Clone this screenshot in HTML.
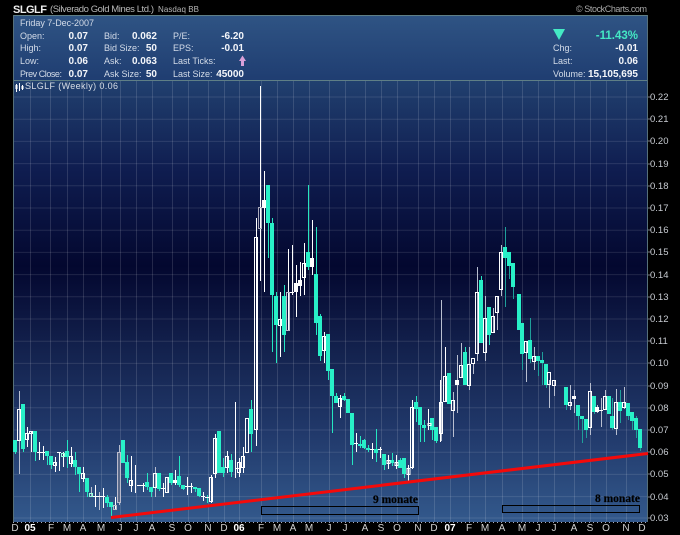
<!DOCTYPE html>
<html><head><meta charset="utf-8"><title>SLGLF</title>
<style>
html,body{margin:0;padding:0;background:#000;width:680px;height:535px;overflow:hidden}
svg{display:block}
text{font-family:"Liberation Sans",sans-serif;font-size:9px;fill:#d3dbe8}
.v{font-weight:bold;fill:#f4f6fa;text-anchor:end;font-size:10px}
.a{font-size:9.5px;fill:#c8ccd2;text-anchor:start}
.x{font-size:10px;fill:#d0d0d0;text-anchor:middle}
.n{font-family:"Liberation Serif",serif;font-weight:bold;font-size:11.5px;fill:#000;stroke:#000;stroke-width:.2}
</style></head><body>
<svg width="680" height="535" viewBox="0 0 680 535" xmlns="http://www.w3.org/2000/svg">
<defs>
<linearGradient id="p" x1="0" y1="0" x2="0" y2="1"><stop offset="0" stop-color="#2f5484"/><stop offset="1" stop-color="#1f3d71"/></linearGradient>
<linearGradient id="c" x1="0" y1="0" x2="0" y2="1"><stop offset="0" stop-color="#21406f"/><stop offset=".2" stop-color="#0f1d50"/><stop offset=".42" stop-color="#03072f"/><stop offset=".62" stop-color="#14234f"/><stop offset=".8" stop-color="#21396b"/><stop offset="1" stop-color="#33598c"/></linearGradient>
</defs>
<rect width="680" height="535" fill="#000"/>
<rect x="13" y="15" width="635" height="66" fill="url(#p)"/>
<rect x="13" y="81" width="635" height="441" fill="url(#c)"/>
<path d="M13 15.5H648M13 80.5H648" stroke="#5f7f86" fill="none"/>
<path d="M13.5 15V522M647.5 15V522" stroke="#56707a" fill="none"/>
<!-- grid -->
<path d="M14 97H647M14 119.2H647M14 141.4H647M14 163.6H647M14 185.8H647M14 208H647M14 230.2H647M14 252.4H647M14 274.6H647M14 296.8H647M14 319H647M14 341.2H647M14 363.4H647M14 385.6H647M14 407.8H647M14 430H647M14 452.2H647M14 474.4H647M14 496.6H647M14 518H647" stroke="#fff" stroke-opacity=".11" fill="none"/>
<path d="M30.5 81V522M50.5 81V522M67.5 81V522M83.5 81V522M101.5 81V522M120.5 81V522M136.5 81V522M152.5 81V522M172.5 81V522M188.5 81V522M208.5 81V522M224.5 81V522M239.5 81V522M261.5 81V522M277.5 81V522M293.5 81V522M309.5 81V522M329.5 81V522M345.5 81V522M365.5 81V522M381.5 81V522M397.5 81V522M418.5 81V522M434.5 81V522M450.5 81V522M469.5 81V522M485.5 81V522M502.5 81V522M522.5 81V522M538.5 81V522M554.5 81V522M574.5 81V522M590.5 81V522M606.5 81V522M626.5 81V522" stroke="#fff" stroke-opacity=".13" fill="none"/>
<path d="M13 522.5H648" stroke="#aab" stroke-dasharray="1 3" fill="none"/>
<path d="M648 97h3M648 119h3M648 141h3M648 164h3M648 186h3M648 208h3M648 230h3M648 252h3M648 275h3M648 297h3M648 319h3M648 341h3M648 363h3M648 386h3M648 408h3M648 430h3M648 452h3M648 474h3M648 497h3M648 518h3" stroke="#778" fill="none"/>
<!-- green wicks -->
<path shape-rendering="crispEdges" fill="none" stroke="#25e6c0" stroke-width="1" d="M15.5 440V454M23.5 404V452M35.5 431V461M47.5 451V465M51.5 456V469M67.5 440V468M75.5 452V475M79.5 467V492M87.5 478V497M107.5 495V507M111.5 502V517M123.5 440V463M127.5 455V483M147.5 473V490M151.5 487V497M159.5 473V491M171.5 473V485M179.5 456V487M183.5 485V490M195.5 487V492M199.5 488V497M207.5 495V503M219.5 431V473M223.5 458V477M231.5 454V477M251.5 400V452M268.5 185V258M272.5 218V352M276.5 292V363M284.5 285V352M308.5 185V270M316.5 227V335M320.5 314V361M328.5 334V380M332.5 369V433M336.5 393V403M344.5 393V401M348.5 399V413M352.5 413V465M360.5 436V448M364.5 439V449M368.5 445V452M376.5 429V462M384.5 454V470M392.5 453V466M400.5 458V468M404.5 458V478M416.5 396V422M420.5 407V442M424.5 420V442M432.5 418V440M436.5 427V443M449.5 373V404M465.5 347V385M481.5 276V343M489.5 307V345"/>
<path shape-rendering="crispEdges" fill="none" stroke="#1f9f9a" stroke-width="1" d="M505.5 227V307M509.5 252V279M513.5 263V299M522.5 323V370M530.5 318V363M538.5 356V376M542.5 352V385M546.5 364V388M566.5 387V410M578.5 405V430M582.5 416V443M586.5 419V438M594.5 396V414M612.5 398V430M620.5 390V423M628.5 403V420M632.5 412V430M636.5 416V438M640.5 429V451"/>
<!-- white wicks -->
<path shape-rendering="crispEdges" fill="none" stroke="#fff" stroke-width="1" d="M27.5 427V447M31.5 431V452M39.5 442V460M43.5 446V460M55.5 457V472M59.5 452V471M63.5 452V467M71.5 447V467M83.5 467V482M95.5 485V507M103.5 488V508M115.5 497V510M131.5 456V492M135.5 465V493M143.5 483V492M163.5 483V497M175.5 470V485M187.5 477V495M191.5 483V493M203.5 492V501M211.5 475V503M215.5 434V478M227.5 451V473M235.5 402V478M239.5 458V477M243.5 447V473M256.5 218V446M260.5 86V281M264.5 171V292M280.5 292V357M288.5 249V331M292.5 245V295M296.5 265V317M300.5 262V296M304.5 243V295M312.5 220V275M324.5 332V363M340.5 395V418M356.5 433V452M372.5 443V459M380.5 447V458M388.5 455V469M396.5 455V469M408.5 465V481M412.5 400V469M428.5 409V430M440.5 380V442M445.5 347V402"/>
<path shape-rendering="crispEdges" fill="none" stroke="#b9bfd0" stroke-width="1" d="M19.5 391V474M91.5 487V497M99.5 492V510M119.5 445V505M155.5 467V497M167.5 477V492M441.5 300V441M453.5 392V437M457.5 355V413M461.5 343V378M469.5 347V390M473.5 363V374M477.5 267V361M485.5 296V361M493.5 308V332M497.5 296V330M501.5 245V296M526.5 341V382M534.5 347V370M549.5 380V408M554.5 380V396M570.5 385V410M574.5 390V413M590.5 383V435M597.5 405V413M601.5 398V427M605.5 390V410M616.5 389V435M624.5 387V409"/>
<!-- green bodies -->
<path shape-rendering="crispEdges" fill="none" stroke="#28f0c8" stroke-width="4" d="M15 440V452M23 404V449M35 431V452M47 451V456M51 456V465M67 451V457M75 460V467M79 467V474M87 478V492M107 497V503M111 502V507M123 440V463M127 462V478M147 482V487M151 487V492M159 473V489M171 473V483M179 476V485M183 485V489M195 487V489M199 488V496M219 431V473M223 467V473M231 460V472M251 409V434M268 185V223M272 223V295M276 296V325M284 296V335M308 252V267M316 274V323M320 316V356M328 334V371M332 369V396M336 396V403M344 396V400M348 399V413M352 413V445M360 444V446M364 440V448M368 448V450M376 449V453M384 454V465M392 460V463M400 460V468M404 458V474M416 402V409M420 407V425M424 425V428M432 418V430M436 427V441M449 373V404M465 352V385M481 280V343M489 307V335M505 247V258M509 252V266M513 263V287M519 294V330M522 323V354M530 340V359M538 356V361M542 360V363M546 364V385M566 387V405M578 405V416M582 416V419M586 419V430M594 396V412M609 396V414M612 416V428M620 402V411M628 403V416M632 412V421M636 418V430M640 429V448"/>
<!-- white solid bodies and dojis -->
<path shape-rendering="crispEdges" fill="none" stroke="#fff" stroke-width="4" d="M175 480V483M264 200V208M296 283V292M300 280V286M312 258V267M457 380V385M574 396V399M597 407V412"/>
<path shape-rendering="crispEdges" fill="none" stroke="#fff" stroke-width="1" d="M37 452.5h4M41 452.5h4M57 452.5h4M93 496.5h4M97 496.5h4M101 496.5h4M137 485.5h4M141 485.5h4M161 488.5h4M185 486.5h4M189 486.5h4M201 496.5h4M205 497.5h4M235 468.5h4M290 292.5h4M354 443.5h4M370 449.5h4M378 449.5h4M599 410.5h4"/>
<!-- hollow white -->
<g fill="none" stroke="#fff" shape-rendering="crispEdges">
<rect x="17.5" y="409.5" width="3" height="31"/><rect x="25.5" y="433.5" width="3" height="6"/><rect x="29.5" y="431.5" width="3" height="2"/><rect x="53.5" y="462.5" width="3" height="3"/><rect x="61.5" y="453.5" width="3" height="3" stroke="#9fd"/><rect x="69.5" y="456.5" width="3" height="7"/><rect x="81.5" y="473.5" width="3" height="5"/><rect x="89.5" y="493.5" width="3" height="3" stroke="#9fd"/><rect x="113.5" y="505.5" width="3" height="4" stroke="#bbc"/><rect x="117.5" y="452.5" width="3" height="50" stroke="#bbc" fill="#5a6a8a"/><rect x="129.5" y="480.5" width="3" height="5"/><rect x="153.5" y="473.5" width="3" height="14"/><rect x="165.5" y="477.5" width="3" height="15"/><rect x="209.5" y="477.5" width="3" height="24"/><rect x="213.5" y="438.5" width="3" height="35"/><rect x="225.5" y="456.5" width="3" height="11"/><rect x="237.5" y="462.5" width="3" height="10"/><rect x="241.5" y="456.5" width="3" height="11"/><rect x="245.5" y="418.5" width="3" height="34"/><rect x="254.5" y="237.5" width="3" height="192"/><rect x="258.5" y="207.5" width="3" height="21" stroke="#aab"/><rect x="278.5" y="319.5" width="3" height="6"/><rect x="286.5" y="292.5" width="3" height="38" stroke="#bbc"/><rect x="302.5" y="263.5" width="3" height="14"/><rect x="322.5" y="336.5" width="3" height="14"/><rect x="338.5" y="398.5" width="3" height="8"/><rect x="387" y="460.5" width="3" height="3"/><rect x="395" y="462.5" width="3" height="3"/><rect x="407" y="468.5" width="3" height="6"/><rect x="410.5" y="407.5" width="3" height="60"/><rect x="428" y="423.5" width="3" height="2"/><rect x="439.5" y="402.5" width="3" height="31"/><rect x="443.5" y="376.5" width="3" height="25"/><rect x="451.5" y="400.5" width="3" height="10"/><rect x="459.5" y="365.5" width="3" height="12"/><rect x="467.5" y="364.5" width="3" height="21"/><rect x="471.5" y="358.5" width="3" height="5"/><rect x="475.5" y="292.5" width="3" height="61"/><rect x="483.5" y="318.5" width="3" height="34"/><rect x="491.5" y="316.5" width="3" height="16"/><rect x="495.5" y="296.5" width="3" height="16"/><rect x="499.5" y="252.5" width="3" height="37"/><rect x="524.5" y="341.5" width="3" height="11"/><rect x="532.5" y="356.5" width="3" height="5"/><rect x="547.5" y="372.5" width="3" height="12"/><rect x="552.5" y="380.5" width="3" height="5"/><rect x="568.5" y="402.5" width="3" height="3"/><rect x="588.5" y="391.5" width="3" height="36"/><rect x="603.5" y="396.5" width="3" height="13"/><rect x="614.5" y="402.5" width="3" height="26"/><rect x="622.5" y="402.5" width="3" height="5"/>
</g>
<!-- trend line and boxes -->
<path d="M111 517.5L648 453.5" stroke="#f40a0a" stroke-width="3" fill="none"/>
<rect x="261.5" y="506.5" width="157" height="8" fill="none" stroke="#000"/>
<rect x="502.5" y="505.5" width="137" height="7" fill="none" stroke="#000"/>
<text class="n" x="373" y="503" textLength="45">9 monate</text>
<text class="n" x="595" y="502" textLength="45">8 monate</text>
<!-- header -->
<text x="13" y="13" textLength="34" style="font-size:11px;fill:#eee;font-weight:bold">SLGLF</text>
<text x="50" y="12" textLength="104" style="font-size:9.5px;fill:#b8b8b8">(Silverado Gold Mines Ltd.)</text>
<text x="158" y="12" textLength="41" style="font-size:8px;fill:#b8b8b8">Nasdaq BB</text>
<text x="576" y="12" textLength="71" style="font-size:9px;fill:#a8a8a8">© StockCharts.com</text>
<text x="20" y="26" textLength="74">Friday  7-Dec-2007</text>
<text x="20" y="39">Open:</text><text x="20" y="51">High:</text><text x="20" y="64">Low:</text><text x="20" y="77" textLength="42">Prev Close:</text>
<text class="v" x="88" y="39">0.07</text><text class="v" x="88" y="51">0.07</text><text class="v" x="88" y="64">0.06</text><text class="v" x="88" y="77">0.07</text>
<text x="104" y="39">Bid:</text><text x="104" y="51">Bid Size:</text><text x="104" y="64">Ask:</text><text x="104" y="77">Ask Size:</text>
<text class="v" x="157" y="39">0.062</text><text class="v" x="157" y="51">50</text><text class="v" x="157" y="64">0.063</text><text class="v" x="157" y="77">50</text>
<text x="173" y="39">P/E:</text><text x="173" y="51">EPS:</text><text x="173" y="64">Last Ticks:</text><text x="173" y="77">Last Size:</text>
<text class="v" x="244" y="39">-6.20</text><text class="v" x="244" y="51">-0.01</text><text class="v" x="244" y="77">45000</text>
<path d="M242.5 55.5L246 61H244V66H241V61H239Z" fill="#d9a0d8"/>
<path d="M553 29H565L559 40Z" fill="#44eac4"/>
<text class="v" x="638" y="39" style="fill:#44e8c4;font-size:11.5px">-11.43%</text>
<text x="553" y="51">Chg:</text><text x="553" y="64">Last:</text><text x="553" y="77">Volume:</text>
<text class="v" x="638" y="51">-0.01</text><text class="v" x="638" y="64">0.06</text><text class="v" x="638" y="77">15,105,695</text>
<!-- chart title -->
<path d="M16.5 84V92M19.5 83V91M22.5 85V90" stroke="#fff" fill="none"/><rect x="15.5" y="85" width="2" height="4" fill="#fff"/><rect x="21.5" y="86" width="2" height="3" fill="#fff"/>
<text x="25" y="89" textLength="93" style="font-size:9px;fill:#d8dde6">SLGLF (Weekly) 0.06</text>
<!-- y axis -->
<text class="a" x="650" y="100">0.22</text><text class="a" x="650" y="122">0.21</text><text class="a" x="650" y="144">0.20</text><text class="a" x="650" y="167">0.19</text><text class="a" x="650" y="189">0.18</text><text class="a" x="650" y="211">0.17</text><text class="a" x="650" y="233">0.16</text><text class="a" x="650" y="255">0.15</text><text class="a" x="650" y="278">0.14</text><text class="a" x="650" y="300">0.13</text><text class="a" x="650" y="322">0.12</text><text class="a" x="650" y="344">0.11</text><text class="a" x="650" y="366">0.10</text><text class="a" x="650" y="389">0.09</text><text class="a" x="650" y="411">0.08</text><text class="a" x="650" y="433">0.07</text><text class="a" x="650" y="455">0.06</text><text class="a" x="650" y="477">0.05</text><text class="a" x="650" y="500">0.04</text><text class="a" x="650" y="521">0.03</text>
<!-- x axis -->
<text class="x" x="15" y="531">D</text><text class="x" x="30" y="531" style="font-weight:bold;fill:#fff">05</text><text class="x" x="51" y="531">F</text><text class="x" x="67" y="531">M</text><text class="x" x="83" y="531">A</text><text class="x" x="101" y="531">M</text><text class="x" x="120" y="531">J</text><text class="x" x="136" y="531">J</text><text class="x" x="152" y="531">A</text><text class="x" x="172" y="531">S</text><text class="x" x="188" y="531">O</text><text class="x" x="208" y="531">N</text><text class="x" x="224" y="531">D</text><text class="x" x="239" y="531" style="font-weight:bold;fill:#fff">06</text><text class="x" x="261" y="531">F</text><text class="x" x="277" y="531">M</text><text class="x" x="293" y="531">A</text><text class="x" x="309" y="531">M</text><text class="x" x="329" y="531">J</text><text class="x" x="345" y="531">J</text><text class="x" x="365" y="531">A</text><text class="x" x="381" y="531">S</text><text class="x" x="397" y="531">O</text><text class="x" x="418" y="531">N</text><text class="x" x="434" y="531">D</text><text class="x" x="450" y="531" style="font-weight:bold;fill:#fff">07</text><text class="x" x="469" y="531">F</text><text class="x" x="485" y="531">M</text><text class="x" x="502" y="531">A</text><text class="x" x="522" y="531">M</text><text class="x" x="538" y="531">J</text><text class="x" x="554" y="531">J</text><text class="x" x="574" y="531">A</text><text class="x" x="590" y="531">S</text><text class="x" x="606" y="531">O</text><text class="x" x="626" y="531">N</text><text class="x" x="642" y="531">D</text>
</svg>
</body></html>
